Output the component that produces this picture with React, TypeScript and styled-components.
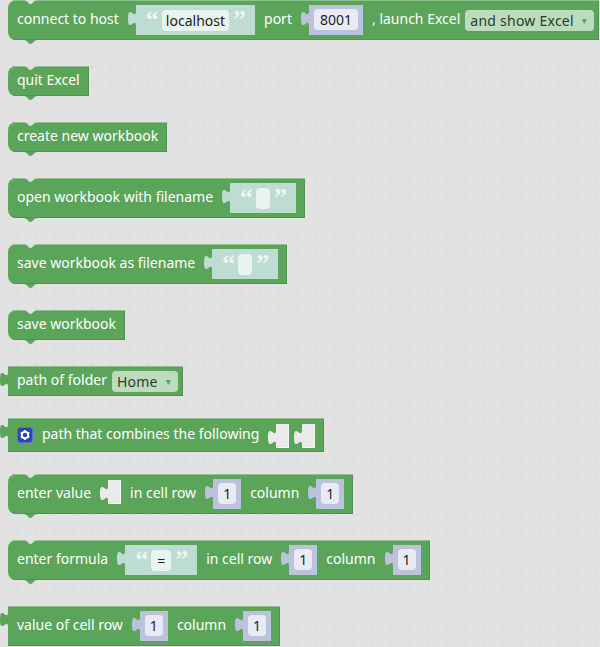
import React from 'react';
import styled, { createGlobalStyle } from 'styled-components';

const GREEN = '#5ba55b';
const CANVAS = '#e2e2e2';

const Global = createGlobalStyle`
  html, body {
    margin: 0;
    padding: 0;
    background: ${CANVAS};
  }
`;

const Workspace = styled.div`
  width: 600px;
  height: 647px;
  overflow: hidden;
  padding-left: 8px;
  box-sizing: border-box;
  display: flex;
  flex-direction: column;
  align-items: flex-start;
  font-family: "Noto Sans", sans-serif;
  font-size: 14px;
  background-color: ${CANVAS};
  background-image: radial-gradient(circle at 1px 1px, #d6d6d6 0.8px, transparent 1.1px);
  background-size: 18.67px 18.67px;
  background-position: 16.5px 9.6px;
`;

const Block = styled.div<{ $h: number; $top: number; $output?: boolean }>`
  position: relative;
  flex: none;
  height: ${p => p.$h}px;
  margin-top: ${p => p.$top}px;
  box-sizing: border-box;
  padding: 0 9px;
  display: flex;
  align-items: center;
  gap: 9px;
  background: ${GREEN};
  color: #fff;
  white-space: nowrap;
  border-radius: ${p => (p.$output ? '0' : '8px 0 0 8px')};
  box-shadow: inset 0 1px 0 #8cc08c, inset -1px -1px 0 #4f944f;

  ${p =>
    !p.$output &&
    `
    &::before, &::after {
      content: "";
      position: absolute;
      left: 15px;
      width: 15px;
      height: 4px;
      clip-path: path("M0 0c2 0 3 .6 4 1.4S6 4 7.5 4 10 2.2 11 1.4 13 0 15 0z");
    }
    &::before { top: 0; background: ${CANVAS}; }
    &::after { bottom: -4px; background: ${GREEN}; }
  `}
`;

const Label = styled.span`
  line-height: 20px;
  margin-top: -2px;
`;

const TabShape = styled.svg`
  display: block;
  flex: none;
  width: 8px;
  height: 20px;
  margin-top: 1px;
`;

const OutputTab = styled(TabShape)`
  position: absolute;
  left: -8px;
  top: 1px;
  margin: 0;
`;

const Tab = ({ color }: { color: string }) => (
  <TabShape viewBox="0 0 8 20">
    <path d="M8 0v5c0 10-8-8-8 7.5S8 10 8 20z" fill={color} />
  </TabShape>
);

const Slot = styled.div`
  display: flex;
  align-items: flex-start;
`;

const EmptyWrap = styled(Slot)`
  align-self: flex-start;
  margin-top: 6px;

  & + & {
    margin-left: -4px;
  }
`;

const StringBox = styled.div`
  height: 30px;
  box-sizing: border-box;
  padding: 5px 10px 4px;
  display: flex;
  gap: 4px;
  background: #bedcd1;
`;

const NumberBox = styled.div`
  height: 30px;
  box-sizing: border-box;
  padding: 4px 5px 5px;
  display: flex;
  background: #bdc2dc;
`;

const Field = styled.span<{ $light: string; $min: number; $pad: number }>`
  display: block;
  height: 21px;
  min-width: ${p => p.$min}px;
  padding: 0 ${p => p.$pad}px;
  box-sizing: border-box;
  border-radius: 4px;
  background: ${p => p.$light};
  color: #222;
  text-align: center;
  line-height: 21px;
`;

const Quote = styled.span`
  font-family: "Liberation Serif", serif;
  font-weight: 700;
  font-size: 26px;
  line-height: 26px;
  height: 21px;
  width: 12px;
  margin-top: -3px;
  color: #eef6f3;
`;

const EmptySlot = styled.div`
  width: 13px;
  height: 24px;
  background: #eaeaea;
  box-shadow: inset -1px -1px 0 #f6f6f6;
`;

const Dropdown = styled.div`
  height: 21px;
  margin: 0 -4px 0 -4px;
  box-sizing: border-box;
  display: flex;
  align-items: center;
  gap: 7px;
  padding: 0 6px 0 5px;
  border-radius: 4px;
  background: #bddcbd;
  color: #2c3a2c;
  letter-spacing: 0.25px;
`;

const Arrow = styled.span`
  width: 7px;
  text-align: center;
  color: ${GREEN};
  font-size: 10px;
  font-family: "DejaVu Sans", sans-serif;
`;

const GearButton = styled.svg`
  display: block;
  flex: none;
  width: 16px;
  height: 16px;
`;

const Str = ({ v }: { v?: string }) => (
  <Slot>
    <Tab color="#bedcd1" />
    <StringBox>
      <Quote>“</Quote>
      <Field $light="#e9f3ef" $min={v ? 20 : 14} $pad={4}>{v}</Field>
      <Quote>”</Quote>
    </StringBox>
  </Slot>
);

const Num = ({ v }: { v: string }) => (
  <Slot>
    <Tab color="#bdc2dc" />
    <NumberBox>
      <Field $light="#e9eaf4" $min={18} $pad={v.length > 1 ? 6 : 4}>{v}</Field>
    </NumberBox>
  </Slot>
);

const Empty = () => (
  <EmptyWrap>
    <Tab color="#eaeaea" />
    <EmptySlot />
  </EmptyWrap>
);

const Out = () => (
  <OutputTab viewBox="0 0 8 20">
    <path d="M8 0v5c0 10-8-8-8 7.5S8 10 8 20z" fill={GREEN} />
  </OutputTab>
);

export default function App() {
  return (
    <Workspace>
      <Global />
      <Block $h={40} $top={0}>
        <Label>connect to host</Label>
        <Str v="localhost" />
        <Label>port</Label>
        <Num v="8001" />
        <Label>, launch Excel</Label>
        <Dropdown>
          and show Excel <Arrow>▾</Arrow>
        </Dropdown>
      </Block>
      <Block $h={30} $top={26}>
        <Label>quit Excel</Label>
      </Block>
      <Block $h={30} $top={26}>
        <Label>create new workbook</Label>
      </Block>
      <Block $h={40} $top={26}>
        <Label>open workbook with filename</Label>
        <Str />
      </Block>
      <Block $h={40} $top={26}>
        <Label>save workbook as filename</Label>
        <Str />
      </Block>
      <Block $h={30} $top={26}>
        <Label>save workbook</Label>
      </Block>
      <Block $h={30} $top={26} $output>
        <Out />
        <Label>path of folder</Label>
        <Dropdown>
          Home <Arrow>▾</Arrow>
        </Dropdown>
      </Block>
      <Block $h={34} $top={22} $output>
        <Out />
        <GearButton viewBox="0 0 16 16">
          <rect x="0.5" y="0.5" width="15" height="15" rx="3" fill="#2b45b5" stroke="#5a6fce" />
          <circle cx="8" cy="8" r="3.2" fill="none" stroke="#fff" strokeWidth="2" />
          <path d="M8 3v2M8 11v2M3.7 5.5l1.7 1M10.6 9.5l1.7 1M3.7 10.5l1.7-1M10.6 6.5l1.7-1" stroke="#fff" strokeWidth="1.8" />
        </GearButton>
        <Label>path that combines the following</Label>
        <Empty />
        <Empty />
      </Block>
      <Block $h={40} $top={22}>
        <Label>enter value</Label>
        <Empty />
        <Label>in cell row</Label>
        <Num v="1" />
        <Label>column</Label>
        <Num v="1" />
      </Block>
      <Block $h={40} $top={26}>
        <Label>enter formula</Label>
        <Str v="=" />
        <Label>in cell row</Label>
        <Num v="1" />
        <Label>column</Label>
        <Num v="1" />
      </Block>
      <Block $h={40} $top={26} $output>
        <Out />
        <Label>value of cell row</Label>
        <Num v="1" />
        <Label>column</Label>
        <Num v="1" />
      </Block>
    </Workspace>
  );
}
